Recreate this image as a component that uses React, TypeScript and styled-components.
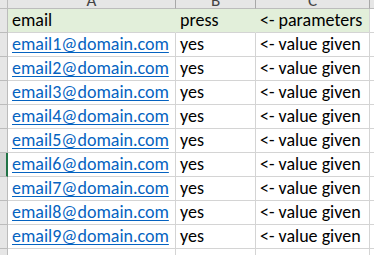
import React from "react";
import styled, { createGlobalStyle } from "styled-components";

const GlobalStyle = createGlobalStyle`
  html, body {
    margin: 0;
    padding: 0;
    background: #fff;
  }
  body {
    font-family: Carlito, Lato, "Liberation Sans", sans-serif;
  }
`

const COLUMNS = ["A", "B", "C", ""]
const SELECTED_ROW = 7

const rows = Array.from({ length: 9 }, (_, i) => ({
  email: `email${i + 1}@domain.com`,
  press: "yes",
  note: "<- value given",
}))

const App: React.FC = () => {
  return (
    <>
      <GlobalStyle />
      <Sheet>
        <Corner />
        {COLUMNS.map((c, i) => (
          <ColHead key={i} last={i === COLUMNS.length - 1}>
            <ColLabel>{c}</ColLabel>
          </ColHead>
        ))}

        <RowHead />
        <Cell filled>email</Cell>
        <Cell filled>press</Cell>
        <Cell filled edge>&lt;- parameters</Cell>
        <Cell />

        {rows.map((r, i) => (
          <React.Fragment key={r.email}>
            <RowHead selected={i + 2 === SELECTED_ROW} />
            <Cell>
              <Link>{r.email}</Link>
            </Cell>
            <Cell>{r.press}</Cell>
            <Cell>{r.note}</Cell>
            <Cell />
          </React.Fragment>
        ))}

        <RowHead />
        <Cell />
        <Cell />
        <Cell />
        <Cell />
      </Sheet>
    </>
  )
}

export default App

const Sheet = styled.div`
  display: grid;
  grid-template-columns: 8px 168px 80px 114px 1fr;
  grid-template-rows: 9px 24px repeat(10, 24px);
  width: 374px;
  height: 255px;
  overflow: hidden;
  font-size: 18px;
  color: #000;
`
const Corner = styled.div`
  background: #e6e6e6;
  border-right: 1px solid #bcbcbc;
  border-bottom: 1px solid #bcbcbc;
`
const ColHead = styled.div<{ last?: boolean }>`
  display: flex;
  align-items: flex-end;
  justify-content: center;
  overflow: hidden;
  background: #e6e6e6;
  border-right: 1px solid ${(p) => (p.last ? "transparent" : "#a8a8a8")};
  border-bottom: 1px solid #bcbcbc;
`
const ColLabel = styled.span`
  font-size: 17px;
  line-height: 1;
  color: #444;
  margin-bottom: -1px;
`
const RowHead = styled.div<{ selected?: boolean }>`
  background: ${(p) => (p.selected ? "#d2d2d2" : "#e6e6e6")};
  border-right: ${(p) => (p.selected ? "2px solid #217346" : "1px solid #bcbcbc")};
  border-bottom: 1px solid #bcbcbc;
`
const Cell = styled.div<{ filled?: boolean; edge?: boolean }>`
  display: flex;
  align-items: flex-end;
  padding: 0 4px 2px 4px;
  white-space: nowrap;
  overflow: visible;
  line-height: 20px;
  background: ${(p) => (p.filled ? "#e2efda" : "#fff")};
  border-right: 1px solid ${(p) => (p.filled && !p.edge ? "#e2efda" : "#d4d4d4")};
  border-bottom: 1px solid #d4d4d4;
`
const Link = styled.span`
  color: #0563c1;
  text-decoration: underline;
  text-underline-offset: 2px;
`
